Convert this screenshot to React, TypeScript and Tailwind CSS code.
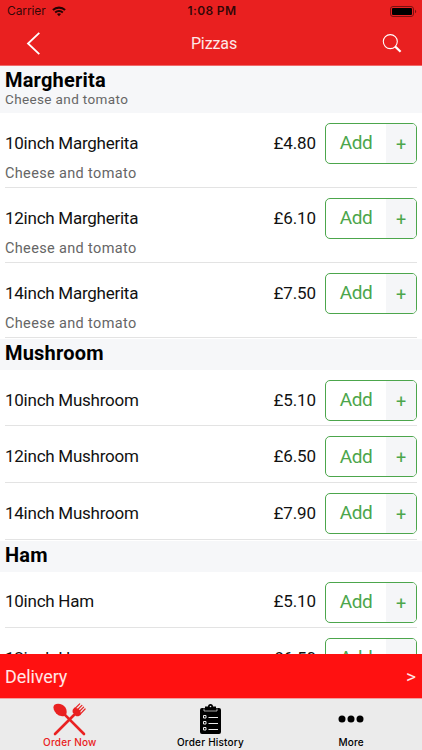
import React from "react";

interface Item {
  name: string;
  price: string;
  note?: string;
}

interface Section {
  title: string;
  note?: string;
  items: Item[];
}

const sections: Section[] = [
  {
    title: "Margherita",
    note: "Cheese and tomato",
    items: [
      { name: "10inch Margherita", price: "£4.80", note: "Cheese and tomato" },
      { name: "12inch Margherita", price: "£6.10", note: "Cheese and tomato" },
      { name: "14inch Margherita", price: "£7.50", note: "Cheese and tomato" }
    ]
  },
  {
    title: "Mushroom",
    items: [
      { name: "10inch Mushroom", price: "£5.10" },
      { name: "12inch Mushroom", price: "£6.50" },
      { name: "14inch Mushroom", price: "£7.90" }
    ]
  },
  {
    title: "Ham",
    items: [
      { name: "10inch Ham", price: "£5.10" },
      { name: "12inch Ham", price: "£6.50" }
    ]
  }
];

const StatusBar: React.FC = () => (
  <div className="grid h-[22px] grid-cols-3 items-center pl-[7px] pr-[5px] font-['Inter',sans-serif] text-[12px] text-black/80">
    <div className="flex items-center gap-[6px]">
      <span className="tracking-[-0.1px]">Carrier</span>
      <svg width="14" height="11" viewBox="0 0 15 11" fill="none" stroke="#240303">
        <path d="M1 4a9.3 9.3 0 0 1 13 0" strokeWidth="2.2" />
        <path d="M3.4 6.6a5.8 5.8 0 0 1 8.2 0" strokeWidth="2" />
        <path d="M7.5 10.5 5.3 8.3a3.2 3.2 0 0 1 4.4 0z" fill="#240303" stroke="none" />
      </svg>
    </div>
    <span className="text-center font-semibold tracking-[0.35px]">1:08 PM</span>
    <svg className="justify-self-end" width="27" height="11" viewBox="0 0 27 11">
      <rect x="0.5" y="0.5" width="23" height="10" rx="2.5" fill="none" stroke="#7a1010" />
      <rect x="2" y="2" width="20" height="7" rx="1" fill="#000" />
      <path d="M25 3.7c1.6.6 1.6 3 0 3.6z" fill="#7a1010" />
    </svg>
  </div>
);

const NavBar: React.FC = () => (
  <div className="flex h-[43px] items-center justify-between pl-[26px] pr-[20px]">
    <button type="button" aria-label="Back">
      <svg width="15" height="24" viewBox="0 0 15 24" fill="none" stroke="#fff" strokeWidth="1.8">
        <path d="M13.3.8 2 11.500l11.300 10.700" />
      </svg>
    </button>
    <h1 className="ml-[5px] text-[16px] tracking-[-0.1px] text-white/90">Pizzas</h1>
    <button type="button" aria-label="Search">
      <svg width="20" height="20" viewBox="0 0 20 20" fill="none" stroke="#fff">
        <circle cx="8.3" cy="7.6" r="7" strokeWidth="1.1" />
        <path d="m13 12.400 5.600 5.400" strokeWidth="2.2" />
      </svg>
    </button>
  </div>
);

const AddButton: React.FC = () => (
  <button
    type="button"
    className="flex h-[41px] w-[92px] shrink-0 overflow-hidden rounded-[5px] border border-[#4ca64c] text-[#4ca64c]"
  >
    <span className="flex h-full w-[60px] items-center justify-center text-[19px] tracking-[-0.4px]">Add</span>
    <span className="flex h-full flex-1 items-center justify-center bg-[#f5f6f8] pt-[2px] text-[18px]">+</span>
  </button>
);

const Row: React.FC<{ item: Item }> = ({ item }) => (
  <div className={item.note ? "h-[75px] px-[5px]" : "h-[56.67px] px-[5px]"}>
    <div className="flex h-full flex-col border-b border-[#e3e3e3] pt-[10px]">
      <div className="flex h-[41px] shrink-0 items-center text-[17px] text-[#111]">
        <span className="flex-1 tracking-[-0.25px]">{item.name}</span>
        <span className="mr-[9px] tracking-[-0.1px]">{item.price}</span>
        <AddButton />
      </div>
      {item.note && (
        <p className="text-[14.5px] leading-[20px] tracking-[0.35px] text-[#666]">{item.note}</p>
      )}
    </div>
  </div>
);

const Tab: React.FC<{ label: string; active?: boolean; children: React.ReactNode }> = ({ label, active, children }) => (
  <button
    type="button"
    className={`flex flex-1 flex-col items-center pr-[1px] font-['Inter',sans-serif] text-[10px] font-medium ${
      active ? "text-[#e92121]" : "text-black"
    }`}
  >
    <span className="flex h-[38px] items-center pt-[2px]">{children}</span>
    <span className="leading-[11px] tracking-[0.2px]">{label}</span>
  </button>
);

const App: React.FC = () => {
  return (
    <div className="flex h-[750px] w-[422px] flex-col overflow-hidden bg-white font-['Roboto',sans-serif]">
      <header className="h-[66px] shrink-0 border-b border-[#f06a6a] bg-[#e92020]">
        <StatusBar />
        <NavBar />
      </header>
      <main className="min-h-0 flex-1 overflow-hidden">
        {sections.map((section) => (
          <section key={section.title} className="pb-[1.3px]">
            <div className={`bg-[#f6f7f9] px-[5px] ${section.note ? "h-[47px] pt-[3px]" : "h-[30.5px] pt-[3px]"}`}>
              <h2 className="text-[20px] leading-[23px] font-bold tracking-[0.2px] text-black">{section.title}</h2>
              {section.note && (
                <p className="text-[13.5px] leading-[15px] tracking-[0.37px] text-[#666]">{section.note}</p>
              )}
            </div>
            {section.items.map((item) => (
              <Row key={item.name} item={item} />
            ))}
          </section>
        ))}
      </main>
      <button
        type="button"
        className="flex h-[45px] shrink-0 items-center justify-between border-b border-[#f3a0a0] bg-[#ff1111] pl-[5px] pr-[6px] text-[18px] text-white/90"
      >
        <span className="tracking-[-0.1px]">Delivery</span>
        <span className="pt-[3px] text-[19px]">&gt;</span>
      </button>
      <nav className="flex h-[51px] shrink-0 bg-[#ebebeb]">
        <Tab label="Order Now" active>
          <svg width="33" height="33" viewBox="0 0 33 33" fill="none" stroke="currentColor" strokeLinecap="round">
            <path d="M1.500 1.800C4.500-.5 10 .8 12.600 4.800c1.300 2.200 1.300 4.500.7 6.400l-2 1.800c-2 .5-4.500.3-6.500-1.200C1.100 9-.9 4.300 1.500 1.800z" fill="currentColor" stroke="none" />
            <path d="M11 10.800 31 31" strokeWidth="2.600" />
            <path d="M2 31 21.500 11.500" strokeWidth="2.600" />
            <path d="M19.800 9.500c-.7-2 0-3.500 1.700-5l3.800 1.300 1.900 1.800.9 3.700c-1.500 1.900-3.400 2.500-5.300 1.700z" fill="currentColor" stroke="none" />
            <path d="m22 5.500 4.700-4.600M24 7.200l4.900-4.800M25.800 9l4.800-4.900M27.500 10.800l4.600-4.800" strokeWidth="1.200" />
          </svg>
        </Tab>
        <Tab label="Order History">
          <svg width="21" height="31" viewBox="0 0 21 31">
            <path d="M2 4h3V2.500h3a2.500 2.500 0 0 1 5 0h3V4h3a2 2 0 0 1 2 2v22a2 2 0 0 1-2 2H2a2 2 0 0 1-2-2V6a2 2 0 0 1 2-2z" />
            <path d="M4 4.500v2.500h13V4.500" fill="none" stroke="#ebebeb" strokeWidth=".7" />
            <circle cx="10.500" cy="2.500" r=".8" fill="#ebebeb" />
            <g fill="none" stroke="#ebebeb" strokeWidth="1">
              <path d="M3.500 11.500h2.500v2.500h-2.500zM3.500 17.500h2.500v2.500h-2.500zM3.500 23.500h2.500v2.500h-2.500zM8.500 13.500h9.500M8.500 19.500h9.500M8.500 25.500h9.500" />
            </g>
          </svg>
        </Tab>
        <Tab label="More">
          <svg width="26" height="8" viewBox="0 0 26 8">
            <circle cx="4" cy="4" r="3.500" />
            <circle cx="13" cy="4" r="3.500" />
            <circle cx="22" cy="4" r="3.500" />
          </svg>
        </Tab>
      </nav>
    </div>
  );
};

export default App;
